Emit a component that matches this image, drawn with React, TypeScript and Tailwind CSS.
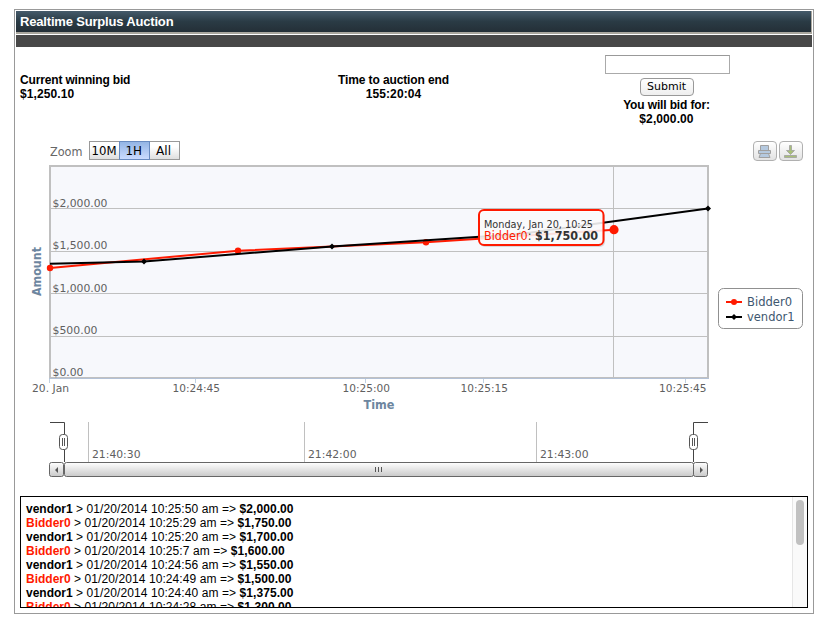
type Point = [number, number]

const bidderPoints: Point[] = [[50, 268], [238, 250.7], [426, 242.3], [614, 229.7]]
const vendorPoints: Point[] = [[50, 263.7], [144, 261.5], [332, 246.5], [520, 234], [708, 208.5]]

const yAxis = [
  { label: '$2,000.00', y: 208.5, base: 206.8, w: 55 },
  { label: '$1,500.00', y: 251.5, base: 249, w: 55 },
  { label: '$1,000.00', y: 293.5, base: 291.8, w: 55 },
  { label: '$500.00', y: 336.5, base: 334, w: 45 },
  { label: '$0.00', y: 378, base: 376.3, w: 31 },
]

const xAxis = [
  { label: '20. Jan', x: 32, w: 37, tick: 49.5 },
  { label: '10:24:45', x: 172.5, w: 47.5, tick: 195.5 },
  { label: '10:25:00', x: 342.5, w: 47.5, tick: 365.5 },
  { label: '10:25:15', x: 460.5, w: 47.5, tick: 483.5 },
  { label: '10:25:45', x: 659, w: 47.5, tick: 685.5 },
]

const navigatorTicks = [
  { label: '21:40:30', x: 88.5 },
  { label: '21:42:00', x: 304.5 },
  { label: '21:43:00', x: 536.5 },
]

const bids = [
  { user: 'vendor1', time: '10:25:50', amount: '$2,000.00' },
  { user: 'Bidder0', time: '10:25:29', amount: '$1,750.00' },
  { user: 'vendor1', time: '10:25:20', amount: '$1,700.00' },
  { user: 'Bidder0', time: '10:25:7', amount: '$1,600.00' },
  { user: 'vendor1', time: '10:24:56', amount: '$1,550.00' },
  { user: 'Bidder0', time: '10:24:49', amount: '$1,500.00' },
  { user: 'vendor1', time: '10:24:40', amount: '$1,375.00' },
  { user: 'Bidder0', time: '10:24:28', amount: '$1,300.00' },
]

function Label({ x, y, w, children, className = 'fill-[#606060] text-[11px]' }: { x: number; y: number; w: number; children: string; className?: string }) {
  return (
    <text x={x} y={y} textLength={w} lengthAdjust="spacingAndGlyphs" className={className}>{children}</text>
  )
}

function Diamond({ x, y }: { x: number; y: number }) {
  return <path d={`M${x} ${y - 3}l3 3-3 3-3-3z`} fill="#000" />
}

function Handle({ x, y }: { x: number; y: number }) {
  return (
    <g stroke="#555">
      <rect x={x - 4} y={y - 7.5} width="8" height="15" rx="3" fill="#fff" />
      <path d={`M${x - 1} ${y - 4}v8M${x + 1} ${y - 4}v8`} />
    </g>
  )
}

function BidChart() {
  return (
    <svg width="702" height="320" viewBox="16 161 702 320" className="block shrink-0 font-['DejaVu_Sans',sans-serif]">
      <defs>
        <linearGradient id="bar" x1="0" y1="0" x2="0" y2="1">
          <stop offset="0" stopColor="#fff" />
          <stop offset="1" stopColor="#c9c9c9" />
        </linearGradient>
      </defs>

      {/* Plot area */}
      <rect x="50" y="166" width="658" height="212" fill="#f7f8fc" stroke="#c0c0c0" strokeWidth="2" />
      {yAxis.slice(0, 4).map(tick => (
        <path key={tick.label} d={`M51 ${tick.y}H707`} stroke="#c0c0c0" />
      ))}
      <path d="M613.5 167V377" stroke="#c0c0c0" />
      <path d="M49 378.5H709" stroke="#b3c1d6" />
      {xAxis.map(tick => (
        <path key={tick.label} d={`M${tick.tick} 379v4`} stroke="#c0d0e0" />
      ))}

      {/* Series */}
      <polyline points={bidderPoints.join(' ')} fill="none" stroke="#ff1a00" strokeWidth="2" />
      {bidderPoints.map(([x, y], i) => (
        <circle key={x} cx={x} cy={y} r={i === 3 ? 4.6 : 3.2} fill="#ff1a00" />
      ))}
      <polyline points={vendorPoints.join(' ')} fill="none" stroke="#000" strokeWidth="2" />
      {vendorPoints.slice(1).map(([x, y]) => <Diamond key={x} x={x} y={y} />)}

      {/* Axis labels */}
      {yAxis.map(tick => (
        <Label key={tick.label} x={52.5} y={tick.base} w={tick.w}>{tick.label}</Label>
      ))}
      {xAxis.map(tick => (
        <Label key={tick.label} x={tick.x} y={392} w={tick.w}>{tick.label}</Label>
      ))}
      <Label x={363.5} y={409} w={31} className="fill-[#6d869f] text-[12px] font-bold">Time</Label>
      <g transform="translate(40.5 296) rotate(-90)">
        <Label x={0} y={0} w={49} className="fill-[#6d869f] text-[12px] font-bold">Amount</Label>
      </g>

      {/* Navigator */}
      {navigatorTicks.map(tick => (
        <g key={tick.label}>
          <path d={`M${tick.x} 422v40`} stroke="#c0c0c0" />
          <Label x={tick.x + 3.5} y={458} w={48.5}>{tick.label}</Label>
        </g>
      ))}
      <path d="M50 422.5H64.5V462M708 422.5H693.5V462" fill="none" stroke="#444" />
      <Handle x={63.5} y={442} />
      <Handle x={693.5} y={442} />

      {/* Scrollbar */}
      <g fill="url(#bar)" stroke="#666">
        <rect x="49.5" y="462.5" width="14" height="14" rx="2" />
        <rect x="64.5" y="462.5" width="629" height="14" rx="2" />
        <rect x="693.5" y="462.5" width="14" height="14" rx="2" />
      </g>
      <path d="M58 467v6l-3-3zM700 467v6l3-3z" fill="#555" />
      <path d="M375.5 467v5M378.5 467v5M381.5 467v5" stroke="#555" />

      {/* Point tooltip */}
      <rect x="480" y="212" width="125" height="35" rx="5" fill="#000" opacity="0.12" />
      <rect x="479" y="210" width="124.5" height="35" rx="5" fill="#fff" fillOpacity="0.87" stroke="#ff1a00" strokeWidth="2" />
      <Label x={484} y={228} w={109} className="fill-[#333] text-[10px]">Monday, Jan 20, 10:25</Label>
      <text x={484} y={240} textLength={114} lengthAdjust="spacingAndGlyphs" className="fill-[#333] text-[12px]">
        <tspan className="fill-[#ff1a00]">Bidder0</tspan>: <tspan className="font-bold">$1,750.00</tspan>
      </text>
    </svg>
  )
}

function Legend() {
  return (
    <svg width="85" height="41" viewBox="718 288 85 41" className="mt-[127px] block font-['DejaVu_Sans',sans-serif]">
      <rect x="718.5" y="288.5" width="84" height="40" rx="5" fill="#fff" stroke="#909090" />
      <path d="M726 302H742" stroke="#ff1a00" strokeWidth="2" />
      <circle cx="734" cy="302" r="3" fill="#ff1a00" />
      <path d="M726 317H742" stroke="#000" strokeWidth="2" />
      <Diamond x={734} y={317} />
      <Label x={747} y={306} w={45} className="fill-[#3e576f] text-[12px]">Bidder0</Label>
      <Label x={747} y={321} w={47.5} className="fill-[#3e576f] text-[12px]">vendor1</Label>
    </svg>
  )
}

function Toolbar() {
  return (
    <div className="flex h-5 items-start pr-[9px] pl-[34px] font-['DejaVu_Sans',sans-serif]">
      <svg width="130" height="20" viewBox="50 141 130 20" className="block">
        <defs>
          <linearGradient id="active" x1="0" y1="0" x2="0" y2="1">
            <stop offset="0" stopColor="#92b4e4" />
            <stop offset="1" stopColor="#cbdcff" />
          </linearGradient>
          <linearGradient id="idle" x1="0" y1="0" x2="0" y2="1">
            <stop offset="0.3" stopColor="#fff" />
            <stop offset="1" stopColor="#dedede" />
          </linearGradient>
        </defs>
        <Label x={50} y={156} w={32.5} className="fill-[#666] text-[12px]">Zoom</Label>
        <rect x="89.5" y="141.5" width="90" height="18" fill="url(#idle)" stroke="#999" />
        <rect x="119.5" y="141.5" width="30" height="18" fill="url(#active)" stroke="#688bc0" />
        <Label x={91.5} y={155} w={25} className="fill-black text-[12px]">10M</Label>
        <Label x={125.5} y={155} w={16.5} className="fill-black text-[12px]">1H</Label>
        <Label x={156} y={155} w={15} className="fill-black text-[12px]">All</Label>
      </svg>
      <div className="ml-auto flex gap-0.5">
        <button className="h-5 w-6 rounded-[4px] border border-[#b0b0b0] bg-linear-to-b from-white to-[#e3e3e3]">
          <svg width="22" height="18" viewBox="754 142 22 18" fill="#b5c9df" stroke="#a0a0a0" className="block">
            <path d="M760.5 145.5h8v5h-8zM760.5 153.5h8l1.5 4h-11zM758.5 150.5h12v3h-12z" />
          </svg>
        </button>
        <button className="h-5 w-6 rounded-[4px] border border-[#b0b0b0] bg-linear-to-b from-white to-[#e3e3e3]">
          <svg width="22" height="18" viewBox="780 142 22 18" fill="#a8bf77" stroke="#a0a0a0" className="block">
            <path d="M789.5 145.5h2v5h3l-4 4-4-4h3zM784.5 155.5h12v2h-12z" strokeWidth="0.8" />
          </svg>
        </button>
      </div>
    </div>
  )
}

export default function App() {
  return (
    <div className="h-[617px] w-[835px] bg-white pt-[9px] pl-[14px] font-['Liberation_Sans',Arial,sans-serif] text-[12px] leading-[14px] text-black">
      <div className="flex h-[605px] w-[800px] flex-col border border-[#999] p-px">
        <header className="h-[23px] shrink-0 border-r border-b-2 border-r-[#aaa79e] border-b-[#aaa79e] bg-linear-to-b from-[#455b6b] via-[#2a3b45] to-[#242f37] pl-1 text-[13px] leading-[21px] font-bold tracking-[-0.18px] text-white">
          Realtime Surplus Auction
        </header>
        <div className="mt-px h-3 shrink-0 bg-[#484848]" />

        <section className="flex h-[94px] shrink-0 font-bold">
          <div className="w-[232px] pt-[26px] pl-1">
            <p className="tracking-[-0.16px]">Current winning bid</p>
            <p className="tracking-[0.1px]">$1,250.10</p>
          </div>
          <div className="w-[291px] pt-[26px] text-center">
            <p className="tracking-[-0.12px]">Time to auction end</p>
            <p className="tracking-[0.1px]">155:20:04</p>
          </div>
          <div className="flex w-[257px] flex-col items-center pt-2 text-center">
            <input className="h-[19px] w-[125px] border border-[#aaa] border-t-[#999] bg-white px-1 outline-none" />
            <button className="mt-1 mr-[2px] mb-[2px] h-[18px] w-[54px] rounded-[4px] border border-[#999] bg-linear-to-b from-white to-[#eee] font-['DejaVu_Sans',sans-serif] text-[11px] leading-4 font-normal">
              Submit
            </button>
            <p className="mr-[2px] tracking-[-0.14px]">You will bid for:</p>
            <p className="mr-[2px] tracking-[0.1px]">$2,000.00</p>
          </div>
        </section>

        <Toolbar />
        <div className="flex h-[335px] shrink-0">
          <BidChart />
          <Legend />
        </div>

        <div className="ml-1 flex h-28 w-[788px] shrink-0 overflow-hidden border border-black">
          <div className="grow pt-[5px] pl-[5px]">
            {bids.map(bid => (
              <p key={bid.time} className="h-[14px] whitespace-pre">
                <b className={bid.user === 'Bidder0' ? 'text-[#ff1a00]' : ''}>{bid.user}</b>
                <span className="tracking-[0.08px]">{` > 01/20/2014 ${bid.time} am => `}</span>
                <b className="tracking-[0.08px]">{bid.amount}</b>
              </p>
            ))}
          </div>
          <div className="w-[15px] border-l border-[#e6e6e6] bg-[#fafafa] pt-[3px] pl-[3px]">
            <div className="h-[45px] w-2 rounded-full bg-[#c1c1c1]" />
          </div>
        </div>
      </div>
    </div>
  )
}
